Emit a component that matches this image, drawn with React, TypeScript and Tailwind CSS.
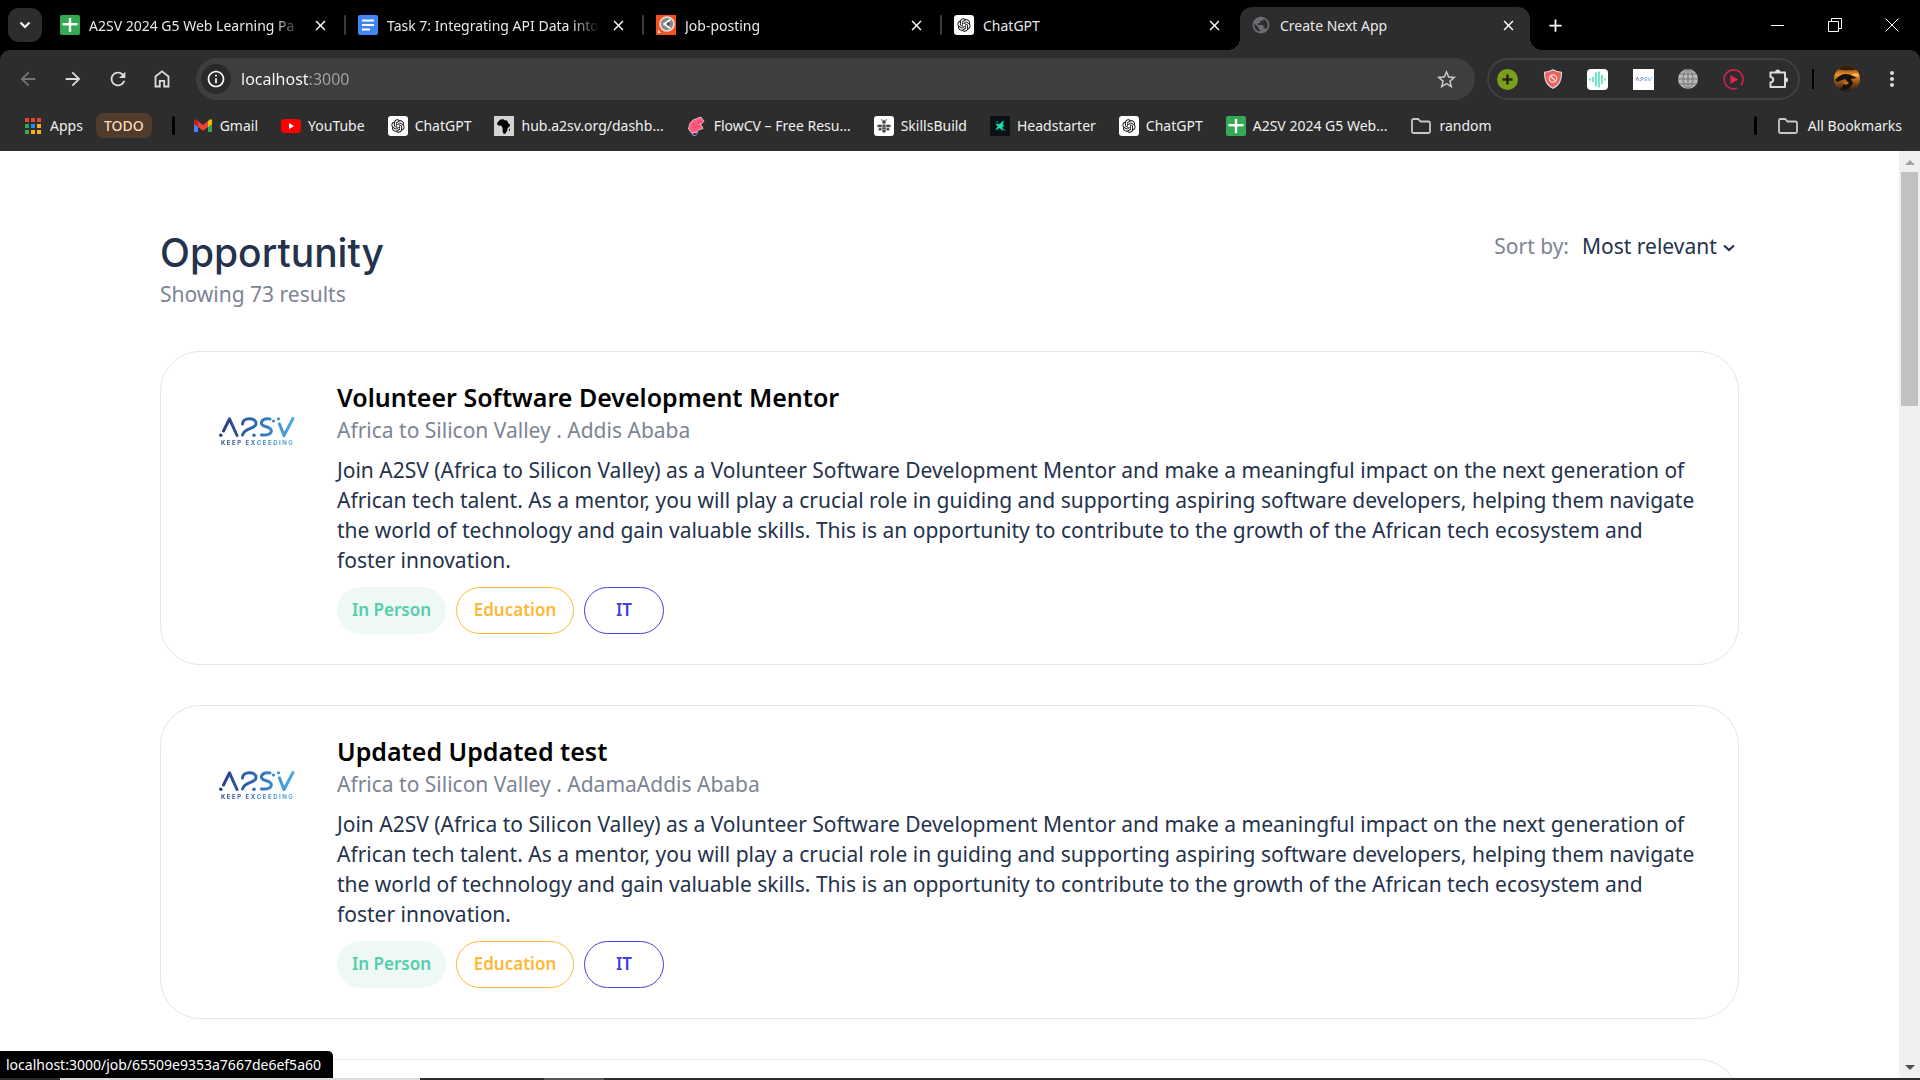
import type { ReactNode } from "react";
import {
  MdAdd,
  MdArrowBack,
  MdArrowForward,
  MdClose,
  MdMoreVert,
  MdOutlineInfo,
  MdPublic,
  MdRefresh,
  MdStarOutline,
} from "react-icons/md";
import { RiOpenaiFill } from "react-icons/ri";

/* ---------- favicons ---------- */

function SheetsIcon() {
  return (
    <svg className="size-5 shrink-0" viewBox="0 0 20 20" aria-hidden="true">
      <rect width="20" height="20" rx="2" fill="#34a853" />
      <path d="M8.8 3h2.4v14H8.8z" fill="#fff" />
      <path d="M2.5 8h15v2.4h-15z" fill="#fff" />
    </svg>
  );
}

function DocsIcon() {
  return (
    <svg className="size-5 shrink-0" viewBox="0 0 20 20" aria-hidden="true">
      <rect width="20" height="20" rx="2" fill="#4285f4" />
      <path d="M4 4.5h12v2H4zM4 9h12v2H4zM4 13.5h8v2H4z" fill="#fff" />
    </svg>
  );
}

function PostmanIcon() {
  return (
    <svg className="size-5 shrink-0" viewBox="0 0 20 20" aria-hidden="true">
      <rect width="20" height="20" fill="#f4511e" />
      <circle cx="11" cy="9" r="7" fill="#8a8a8a" stroke="#e5e5e5" strokeWidth="1.6" />
      <path d="M14.5 4.5 8 9l6.5 4.5" fill="none" stroke="#fff" strokeWidth="1.6" />
      <circle cx="12.5" cy="9" r="1.7" fill="#555" />
      <path d="M2 18v-3.5L5 18z" fill="#fff" />
    </svg>
  );
}

function ChatGptIcon() {
  return (
    <span className="grid size-5 shrink-0 place-items-center rounded-[3px] bg-white text-black">
      <RiOpenaiFill size={16} />
    </span>
  );
}

function GmailIcon() {
  return (
    <svg className="size-5 shrink-0" viewBox="0 0 20 20" aria-hidden="true">
      <path d="M1 5v11h4V8z" fill="#4285f4" />
      <path d="M19 5v11h-4V8z" fill="#34a853" />
      <path d="m15 5 2-1.6c1-.6 2 .1 2 1.2V8l-4 3z" fill="#fbbc04" />
      <path d="M1 8V4.6c0-1.100 1-1.800 2-1.200L5 5v6z" fill="#c5221f" />
      <path d="m5 5 5 3.900L15 5v6l-5 3.800L5 11z" fill="#ea4335" />
    </svg>
  );
}

function YouTubeIcon() {
  return (
    <svg className="size-5 shrink-0" viewBox="0 0 20 20" aria-hidden="true">
      <rect y="3" width="20" height="14" rx="4" fill="#f00" />
      <path d="m8 7 5 3-5 3z" fill="#fff" />
    </svg>
  );
}

function AfricaIcon() {
  return (
    <svg className="size-5 shrink-0" viewBox="0 0 20 20" aria-hidden="true">
      <rect width="20" height="20" fill="#d4d4d4" />
      <path
        d="M4.500 5.200 6.500 3.600l3-.4 1 1 2.500.2 1.300 2.900 1.900 1.400-.4 1.600-2.300 2-.2 2.300-1.800 2.800-1.700.6-1.200-2.600.1-3.200-1.300-2.400-3.200-.3-1.300-2z"
        fill="#000"
      />
      <path d="m15.500 12.500.7.3-.7 2.500-.7-.2z" fill="#000" />
    </svg>
  );
}

function FlowIcon() {
  return (
    <svg className="size-5 shrink-0" viewBox="0 0 20 20" aria-hidden="true">
      <path d="M5 15.500 11 16l-2.500 3.800-3-.8z" fill="#3b1d7a" stroke="#ddd" strokeWidth=".6" />
      <path
        d="M13.800 1 17 5.200l-1.200 1.500-3.300 1.700 1.800.6 1.700 3.400-4.500 1.800L9 16.500l-4.500.5L1.500 13 2.800 7.500 6 4z"
        fill="#ff5a82"
        stroke="#f3d5dd"
        strokeWidth=".8"
      />
      <path d="M6 8.500c3 0 4.500-2.800 9-3M5.500 12c3 0 4-2 8-2" fill="none" stroke="#e23c66" strokeWidth=".8" />
    </svg>
  );
}

function BeeIcon() {
  return (
    <svg className="size-5 shrink-0" viewBox="0 0 20 20" aria-hidden="true">
      <rect width="20" height="20" rx="3" fill="#fff" />
      <g fill="#444" stroke="#fff" strokeWidth=".5">
        <circle cx="10" cy="6" r="2.200" />
        <path d="M6.500 3.200 8 3l1 1.800-.9.700zM13.500 3.200 12 3l-1 1.800.9.700z" />
        <ellipse cx="6" cy="10" rx="3" ry="1.700" />
        <ellipse cx="14" cy="10" rx="3" ry="1.700" />
        <ellipse cx="6.300" cy="13.200" rx="2.300" ry="1.500" />
        <ellipse cx="13.700" cy="13.200" rx="2.300" ry="1.500" />
        <ellipse cx="10" cy="12.500" rx="2.200" ry="4.500" />
        <path d="M7.800 11h4.400M7.800 13.500h4.400" />
      </g>
    </svg>
  );
}

function HeadstarterIcon() {
  return (
    <svg className="size-5 shrink-0" viewBox="0 0 20 20" aria-hidden="true">
      <rect width="20" height="20" fill="#0b1114" />
      <path d="m5 7.500 4 .7 1.300-1 3.700-2.700-1.200 4 1.700 1.700-2 .2.200 4.900-2.900-3.200-4.600 2.400 2.400-4.300z" fill="#12e0b0" />
      <path d="m12.800 12.500 2 2M6.500 5.500l1.500 1" stroke="#12e0b0" />
    </svg>
  );
}

function FolderIcon() {
  return (
    <svg className="size-[22px] shrink-0" viewBox="0 0 22 22" aria-hidden="true">
      <path
        d="M2 5.500c0-1 .600-1.500 1.500-1.500h4.700l2.300 2.500h8c.9 0 1.500.6 1.500 1.500v8.500c0 .9-.6 1.500-1.500 1.500h-15C2.600 18 2 17.400 2 16.500z"
        fill="none"
        stroke="#c7c7c7"
        strokeWidth="1.800"
      />
    </svg>
  );
}

function AppsIcon() {
  const colors = ["#ea4335", "#ea4335", "#ea4335", "#34a853", "#1a8cff", "#fbae17", "#34a853", "#fbae17", "#fbae17"];
  return (
    <span className="grid shrink-0 grid-cols-3 gap-[2px]">
      {colors.map((color, i) => (
        <span key={i} className="size-1" style={{ backgroundColor: color }} />
      ))}
    </span>
  );
}

function HomeIcon() {
  return (
    <svg className="size-5" viewBox="0 0 20 20" aria-hidden="true">
      <path
        d="M3.500 17.500V7.500L10 2.300l6.500 5.200v10h-4.300v-5.700H7.800v5.700z"
        fill="none"
        stroke="currentColor"
        strokeWidth="1.800"
      />
    </svg>
  );
}

function PuzzleIcon() {
  return (
    <svg className="size-[22px]" viewBox="0 0 22 22" aria-hidden="true">
      <path
        d="M2.500 4.500h14.500v14.500H2.500v-4.500c3.600-.4 3.600-5 0-5.400z"
        fill="none"
        stroke="currentColor"
        strokeWidth="2"
        strokeLinejoin="round"
      />
      <path d="M7.200 4a2.600 2.600 0 0 1 5.200 0zM17.500 9.200a2.600 2.600 0 0 1 0 5.200z" fill="currentColor" />
    </svg>
  );
}

/* ---------- browser chrome ---------- */

type Tab = { title: string; icon: ReactNode; active?: boolean; divider?: boolean };

const tabs: Tab[] = [
  { title: "A2SV 2024 G5 Web Learning Pa", icon: <SheetsIcon />, divider: true },
  { title: "Task 7: Integrating API Data into", icon: <DocsIcon />, divider: true },
  { title: "Job-posting", icon: <PostmanIcon />, divider: true },
  { title: "ChatGPT", icon: <ChatGptIcon /> },
  { title: "Create Next App", icon: <MdPublic className="shrink-0 text-[#6b6f74]" size={20} />, active: true },
];

function TabItem({ tab }: { tab: Tab }) {
  return (
    <div
      className={
        tab.active
          ? "relative -ml-3 flex h-[43px] w-[290px] items-center gap-[9px] rounded-t-[12px] bg-[#2d2d2d] pr-3 pb-[7px] pl-[11px]"
          : "flex h-[43px] w-[298px] items-center gap-[9px] pr-[6px] pb-[7px]"
      }
    >
      {tab.active && (
        <>
          <span className="absolute bottom-0 -left-3 size-3 bg-[radial-gradient(circle_at_0_0,#000_12px,#2d2d2d_12px)]" />
          <span className="absolute -right-3 bottom-0 size-3 bg-[radial-gradient(circle_at_100%_0,#000_12px,#2d2d2d_12px)]" />
        </>
      )}
      {tab.icon}
      <span
        className={
          tab.divider
            ? "w-[212px] overflow-hidden text-[14px] whitespace-nowrap text-[#e8e8e8] mask-[linear-gradient(to_right,#000_185px,transparent)]"
            : "w-[212px] text-[14px] whitespace-nowrap text-[#e8e8e8]"
        }
      >
        {tab.title}
      </span>
      <button type="button" aria-label={`Close ${tab.title}`} className="grid size-5 shrink-0 place-items-center text-white">
        <MdClose size={17} />
      </button>
      {tab.divider && <span className="ml-[5px] h-5 w-[2px] rounded bg-[#3a3a3a]" />}
    </div>
  );
}

function TabStrip() {
  return (
    <div className="flex h-[50px] items-end bg-black">
      <button
        type="button"
        aria-label="Search tabs"
        className="mb-2 ml-2 grid h-[34px] w-[34px] shrink-0 place-items-center rounded-[11px] bg-[#2d2d2d] text-white"
      >
        <svg className="size-4" viewBox="0 0 16 16" aria-hidden="true">
          <path d="m3.500 5.500 4.500 4.500 4.500-4.500" fill="none" stroke="currentColor" strokeWidth="2.200" />
        </svg>
      </button>
      <div className="ml-[18px] flex">
        {tabs.map((tab) => (
          <TabItem key={tab.title} tab={tab} />
        ))}
      </div>
      <button type="button" aria-label="New tab" className="mb-3 ml-3 grid size-[26px] place-items-center text-white">
        <MdAdd size={21} />
      </button>
      <div className="mb-[9px] ml-auto flex text-white">
        <button type="button" aria-label="Minimize" className="grid h-8 w-[57px] place-items-center">
          <span className="h-px w-[13px] bg-white" />
        </button>
        <button type="button" aria-label="Restore" className="grid h-8 w-[57px] place-items-center">
          <svg className="size-[14px]" viewBox="0 0 14 14" aria-hidden="true">
            <path d="M.5 3.500h10v10H.5zM3.500 3V.5h10v10H11" fill="none" stroke="currentColor" />
          </svg>
        </button>
        <button type="button" aria-label="Close window" className="grid h-8 w-[57px] place-items-center">
          <svg className="size-[14px]" viewBox="0 0 14 14" aria-hidden="true">
            <path d="m.5.5 13 13M13.500.5l-13 13" stroke="currentColor" />
          </svg>
        </button>
      </div>
    </div>
  );
}

function Extensions() {
  return (
    <div className="ml-3 flex h-[42px] w-[313px] items-center justify-between rounded-full border-2 border-[#404040] px-2">
      <button type="button" aria-label="Add extension">
        <svg className="size-[21px]" viewBox="0 0 20 20" aria-hidden="true">
          <circle cx="10" cy="10" r="10" fill="#7a9f1d" />
          <path d="M8.800 5.200h2.400v3.600h3.600v2.400h-3.600v3.600H8.800v-3.600H5.200V8.800h3.600z" fill="#22270f" />
        </svg>
      </button>
      <button type="button" aria-label="Ad blocker">
        <svg className="size-5" viewBox="0 0 20 20" aria-hidden="true">
          <path d="M10 .7c3 1.700 5.500 2.300 8.500 2.500 0 8-1.800 12.800-8.500 16.100C3.300 16 1.500 11.200 1.500 3.200 4.500 3 7 2.400 10 .7z" fill="#f0625f" stroke="#dcdcdc" strokeWidth="1.100" />
          <circle cx="10" cy="9.500" r="3.700" fill="none" stroke="#f3dede" strokeWidth="1.200" />
          <path d="m7.500 7 5 5" stroke="#f3dede" strokeWidth="1.200" />
        </svg>
      </button>
      <button type="button" aria-label="Transcriber">
        <svg className="size-[21px]" viewBox="0 0 21 21" aria-hidden="true">
          <rect width="21" height="21" rx="4" fill="#fff" />
          <path d="M3 9.500v2M6 8v5M9 3.500v14M12 2.500v16M15 6v9M18 9.500v2" stroke="#3fe0bd" strokeWidth="1.500" />
        </svg>
      </button>
      <button type="button" aria-label="Hub" className="grid size-[21px] place-items-center bg-white">
        <LogoMark className="w-[17px]" />
      </button>
      <button type="button" aria-label="Web">
        <svg className="size-5" viewBox="0 0 20 20" aria-hidden="true">
          <circle cx="10" cy="10" r="10" fill="#b8b8b8" />
          <g fill="none" stroke="#737373">
            <path d="M10 0v20M0 10h20M2 5h16M2 15h16" />
            <ellipse cx="10" cy="10" rx="5" ry="9.500" />
          </g>
        </svg>
      </button>
      <button type="button" aria-label="Video speed">
        <svg className="size-[21px]" viewBox="0 0 20 20" aria-hidden="true">
          <path d="M13.500 18.200A9 9 0 1 1 17.200 15.400" fill="none" stroke="#d6204e" strokeWidth="1.500" />
          <path d="m7 5.800 7.500 4.200L7 14.200z" fill="#e0244f" />
        </svg>
      </button>
      <button type="button" aria-label="Extensions" className="text-[#dcdcdc]">
        <PuzzleIcon />
      </button>
    </div>
  );
}

function Toolbar() {
  return (
    <div className="flex h-[58px] items-center pr-4 pl-[17px] text-[#dcdcdc]">
      <div className="flex items-center gap-[23px]">
        <button type="button" aria-label="Back" className="text-[#757575]"><MdArrowBack size={22} /></button>
        <button type="button" aria-label="Forward"><MdArrowForward size={22} /></button>
        <button type="button" aria-label="Reload"><MdRefresh size={22} /></button>
        <button type="button" aria-label="Home"><HomeIcon /></button>
      </div>
      <div className="ml-6 flex h-[42px] flex-1 items-center rounded-full bg-[#3e3e3e] pr-[17px] pl-[5px]">
        <span className="grid size-[30px] place-items-center rounded-full bg-[#2a2a2a] text-white">
          <MdOutlineInfo size={20} />
        </span>
        <input
          type="text"
          aria-label="Address"
          defaultValue="localhost:3000"
          className="ml-[10px] min-w-0 flex-1 bg-[linear-gradient(to_right,#fff_67px,#a3a3a3_67px)] bg-clip-text text-[16px] text-transparent outline-none"
        />
        <button type="button" aria-label="Bookmark this page" className="text-[#c7c7c7]"><MdStarOutline size={23} /></button>
      </div>
      <Extensions />
      <span className="ml-3 h-5 w-[2px] bg-black" />
      <button type="button" aria-label="Profile" className="ml-5 size-[26px]">
        <svg className="size-full" viewBox="0 0 26 26" aria-hidden="true">
          <defs>
            <clipPath id="avatar"><circle cx="13" cy="13" r="13" /></clipPath>
            <linearGradient id="flame" x2="0" y2="1">
              <stop stopColor="#6b3308" />
              <stop offset=".35" stopColor="#f0942a" />
              <stop offset=".7" stopColor="#7a4312" />
              <stop offset="1" stopColor="#1c1917" />
            </linearGradient>
          </defs>
          <g clipPath="url(#avatar)">
            <path d="M0 0h26v26H0z" fill="url(#flame)" />
            <path d="M1 14c5-6 10-7 16-5l6 3-6 1 2 4-4 6-9 1 4-6 4-2-3-3-8 3z" fill="#161210" />
            <path d="M9 17c2-2 4-2 6 0l-3 2z" fill="#c9741c" />
            <path d="M4 3c5 2 12 1 18 1l-3-4H7z" fill="#3a1c08" />
            <path d="M17 9c3-2 5-2 8-1l-1 3z" fill="#ffb347" />
          </g>
        </svg>
      </button>
      <button type="button" aria-label="Menu" className="ml-5"><MdMoreVert size={24} /></button>
    </div>
  );
}

const bookmarks: { label: string; icon: ReactNode }[] = [
  { label: "Gmail", icon: <GmailIcon /> },
  { label: "YouTube", icon: <YouTubeIcon /> },
  { label: "ChatGPT", icon: <ChatGptIcon /> },
  { label: "hub.a2sv.org/dashb...", icon: <AfricaIcon /> },
  { label: "FlowCV – Free Resu...", icon: <FlowIcon /> },
  { label: "SkillsBuild", icon: <BeeIcon /> },
  { label: "Headstarter", icon: <HeadstarterIcon /> },
  { label: "ChatGPT", icon: <ChatGptIcon /> },
  { label: "A2SV 2024 G5 Web...", icon: <SheetsIcon /> },
  { label: "random", icon: <FolderIcon /> },
];

function BookmarksBar() {
  return (
    <div className="flex h-[43px] items-center pr-[18px] pb-[8px] pl-[25px] text-[14px] whitespace-nowrap text-[#f0f0f0]">
      <a href="#apps" className="flex items-center gap-[9px]"><AppsIcon />Apps</a>
      <button type="button" className="ml-[13px] h-[25px] rounded-[8px] bg-[#513c2c] px-2 font-medium text-[#fbd9bd]">TODO</button>
      <span className="mr-[18px] ml-5 h-[19px] w-[3px] rounded bg-black" />
      <div className="flex items-center gap-[23px]">
        {bookmarks.map((b, i) => (
          <a key={i} href="#bookmark" className="flex items-center gap-[7px]">{b.icon}{b.label}</a>
        ))}
      </div>
      <span className="mr-5 ml-auto h-[19px] w-[3px] rounded bg-black" />
      <button type="button" className="flex items-center gap-[9px]"><FolderIcon />All Bookmarks</button>
    </div>
  );
}

/* ---------- page ---------- */

function LogoMark({ className }: { className: string }) {
  return (
    <svg className={className} viewBox="0 0 76 20" fill="none" aria-hidden="true">
      <defs>
        <linearGradient id="a2sv" x1="0" x2="76" y1="0" y2="0" gradientUnits="userSpaceOnUse">
          <stop stopColor="#2b3a86" />
          <stop offset=".5" stopColor="#2f6db5" />
          <stop offset="1" stopColor="#4bb0e2" />
        </linearGradient>
      </defs>
      <g stroke="url(#a2sv)" strokeWidth="3" strokeLinecap="round" strokeLinejoin="round">
        <path d="M4.500 14 10.500 1.800 18 18.500" />
        <path d="M23.500 7c0-7 13.500-7 13.500-.5 0 6-11.500 3.500-13.500 11.500" />
        <path d="M51 2c-9-1.500-11.500 6-4.500 7.500 9 1.800 7.500 9.500-4 8.500" />
        <path d="m60.500 7 4.500 11.500L74 1.500" />
      </g>
      <g fill="url(#a2sv)">
        <circle cx="1.800" cy="18.200" r="1.700" />
        <circle cx="35" cy="18.200" r="1.700" />
        <circle cx="54.500" cy="4" r="1.600" />
        <circle cx="59.500" cy="1.800" r="1.600" />
      </g>
    </svg>
  );
}

function CompanyLogo() {
  return (
    <div className="flex w-[76px] flex-col items-center">
      <LogoMark className="w-[76px]" />
      <span className="mt-[3px] flex w-full justify-between bg-linear-to-r from-[#2b3a86] to-[#4bb0e2] bg-clip-text px-[2px] font-['Inter',sans-serif] text-[6px] leading-[6px] font-bold text-transparent">
        {"KEEP EXCEEDING".split("").map((c, i) => (
          <span key={i}>{c === " " ? "\u00a0" : c}</span>
        ))}
      </span>
    </div>
  );
}

type Job = { title: string; place: string };

const description =
  "Join A2SV (Africa to Silicon Valley) as a Volunteer Software Development Mentor and make a meaningful impact on the next generation of African tech talent. As a mentor, you will play a crucial role in guiding and supporting aspiring software developers, helping them navigate the world of technology and gain valuable skills. This is an opportunity to contribute to the growth of the African tech ecosystem and foster innovation.";

const jobs: Job[] = [
  { title: "Volunteer Software Development Mentor", place: "Africa to Silicon Valley . Addis Ababa" },
  { title: "Updated Updated test", place: "Africa to Silicon Valley . AdamaAddis Ababa" },
];

function JobCard({ job }: { job: Job }) {
  return (
    <a href="#job" className="flex shrink-0 rounded-[40px] border border-[#e5e5e8] pt-[29px] pr-10 pb-[30px] pl-[58px]">
      <div className="w-[118px] shrink-0 pt-9">
        <CompanyLogo />
      </div>
      <div className="min-w-0 flex-1">
        <h2 className="text-[25px] leading-8 font-semibold text-black">{job.title}</h2>
        <p className="mt-[2px] text-[21px] leading-[30px] text-[#7c8493]">{job.place}</p>
        <p className="mt-[10px] text-[21px] leading-[30px] text-[#25324b]">{description}</p>
        <div className="mt-3 flex gap-[10px] text-[17px] leading-[25px] font-semibold">
          <span className="h-[47px] w-[109px] rounded-full bg-[#eef9f6] pt-[10px] text-center text-[#56cdad]">In Person</span>
          <span className="h-[47px] w-[118px] rounded-full border border-[#ffb836] pt-[9px] text-center text-[#ffb836]">Education</span>
          <span className="h-[47px] w-20 rounded-full border border-[#4640de] pt-[9px] text-center text-[#4640de]">IT</span>
        </div>
      </div>
    </a>
  );
}

function Scrollbar() {
  return (
    <div className="flex w-[21px] shrink-0 flex-col items-center bg-[#f0f0f0]" aria-hidden="true">
      <span className="mt-[9px] border-x-[5px] border-b-[5px] border-x-transparent border-b-[#a3a3a3]" />
      <span className="mt-[7px] h-[234px] w-[17px] bg-[#c1c1c1]" />
      <span className="mt-auto mb-2 border-x-[5px] border-t-[5px] border-x-transparent border-t-[#505050]" />
    </div>
  );
}

export default function App() {
  return (
    <div className="relative flex h-screen flex-col overflow-hidden bg-white font-['Noto_Sans',sans-serif]">
      <header className="shrink-0 bg-black">
        <TabStrip />
        <div className="rounded-t-[10px] bg-[#2d2d2d]">
          <Toolbar />
          <BookmarksBar />
        </div>
      </header>

      <div className="flex min-h-0 flex-1">
        <main className="min-w-0 flex-1 overflow-hidden px-40 pt-[76px]">
          <div className="flex justify-between">
            <div>
              <h1 className="font-['Inter',sans-serif] text-[39px] leading-[52px] font-medium text-[#25324b]">Opportunity</h1>
              <p className="text-[21px] leading-[30px] text-[#7c8493]">Showing 73 results</p>
            </div>
            <div className="flex h-10 items-center text-[21px]">
              <label htmlFor="sort" className="mr-[13px] text-[#7c8493]">Sort by:</label>
              <div className="relative mr-1">
                <select id="sort" className="appearance-none bg-transparent pr-[18px] text-[#25324b] outline-none">
                  <option>Most relevant</option>
                </select>
                <svg className="pointer-events-none absolute inset-y-0 right-0 my-auto size-3 text-[#25324b]" viewBox="0 0 12 12" aria-hidden="true">
                  <path d="m1 4.500 5 4.500 5-4.500" fill="none" stroke="currentColor" strokeWidth="2.200" />
                </svg>
              </div>
            </div>
          </div>

          <div className="mt-[42px] flex flex-col gap-10">
            {jobs.map((job) => (
              <JobCard key={job.title} job={job} />
            ))}
            <div className="h-40 shrink-0 rounded-[40px] border border-[#e5e5e8]" />
          </div>
        </main>
        <Scrollbar />
      </div>

      <footer className="flex h-[2px] shrink-0 bg-[#2f2b2d]">
        <span className="ml-[60px] w-[360px] bg-[#dcdcdc]" />
        <span className="ml-[124px] w-[60px] bg-[#555]" />
      </footer>

      <div className="absolute bottom-[2px] left-0 h-[27px] rounded-tr-[5px] bg-black pr-3 pl-[6px] text-[14px] leading-[27px] text-white">
        localhost:3000/job/65509e9353a7667de6ef5a60
      </div>
    </div>
  );
}
